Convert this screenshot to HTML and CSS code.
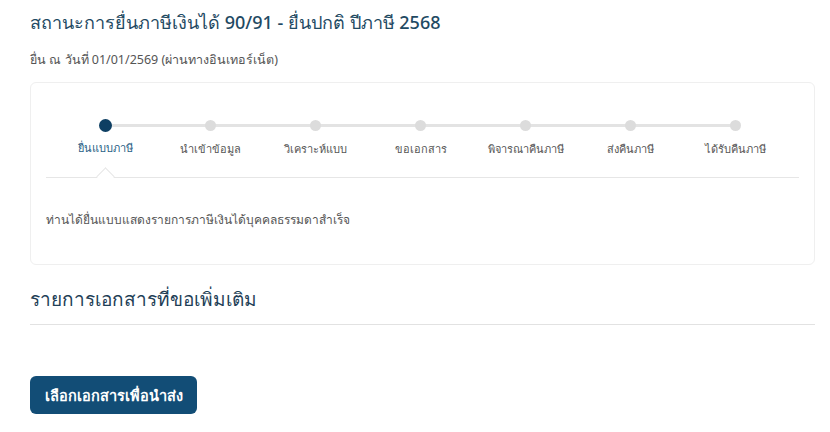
FILE: index.html
```html
<!DOCTYPE html>
<html lang="th">
<head>
<meta charset="utf-8">
<link rel="stylesheet" href="styles.css">
</head>
<body>
<main class="page">
  <h1 class="title">สถานะการยื่นภาษีเงินได้ 90/91 - ยื่นปกติ ปีภาษี 2568</h1>
  <p class="sub">ยื่น ณ วันที่ 01/01/2569 (ผ่านทางอินเทอร์เน็ต)</p>
  <section class="card">
    <ol class="steps">
      <li class="step active"><span class="dot"></span><span class="label">ยื่นแบบภาษี</span></li>
      <li class="step"><span class="dot"></span><span class="label">นำเข้าข้อมูล</span></li>
      <li class="step"><span class="dot"></span><span class="label">วิเคราะห์แบบ</span></li>
      <li class="step"><span class="dot"></span><span class="label">ขอเอกสาร</span></li>
      <li class="step"><span class="dot"></span><span class="label">พิจารณาคืนภาษี</span></li>
      <li class="step"><span class="dot"></span><span class="label">ส่งคืนภาษี</span></li>
      <li class="step"><span class="dot"></span><span class="label">ได้รับคืนภาษี</span></li>
    </ol>
    <div class="divider"><span class="notch"></span></div>
    <p class="msg">ท่านได้ยื่นแบบแสดงรายการภาษีเงินได้บุคคลธรรมดาสำเร็จ</p>
  </section>
  <h2 class="title2">รายการเอกสารที่ขอเพิ่มเติม</h2>
  <button class="btn">เลือกเอกสารเพื่อนำส่ง</button>
</main>
</body>
</html>
```
FILE: styles.css
```css
html, body { margin: 0; padding: 0; background: #fff; }
body { font-family: "Noto Sans", "Liberation Sans", sans-serif; }
.page { padding: 8px 15px 0 30px; }
.title {
  margin: 0;
  font-size: 18px;
  font-weight: 500;
  color: #1f4a63;
  line-height: 28px;
}
.sub {
  margin: 16px 0 0;
  font-size: 12.5px;
  color: #555;
  line-height: 16px;
}
.card {
  margin-top: 14px;
  border: 1px solid #efefef;
  border-radius: 6px;
  padding: 0 15px 36px;
}
.steps {
  list-style: none;
  margin: 36px 0 0 7px;
  padding: 0;
  display: grid;
  grid-template-columns: repeat(7, 105px);
  position: relative;
}
.steps::before {
  content: "";
  position: absolute;
  left: 52px;
  width: 630px;
  top: 5px;
  height: 3px;
  background: #e3e3e3;
}
.step {
  display: flex;
  flex-direction: column;
  align-items: center;
  position: relative;
}
.dot {
  width: 11px;
  height: 11px;
  border-radius: 50%;
  background: #dcdcdc;
  margin-top: 1px;
}
.active .dot {
  width: 13px;
  height: 13px;
  margin-top: 0;
  background: #0e3f63;
}
.label {
  margin-top: 8px;
  font-size: 11px;
  color: #555;
  line-height: 16px;
}
.step:not(.active) .label { margin-top: 10px; }
.active .label { color: #2a5f86; }
.divider {
  margin-top: 20px;
  height: 1px;
  background: #e6e6e6;
  position: relative;
}
.notch {
  position: absolute;
  left: 53px;
  top: -7px;
  width: 12px;
  height: 12px;
  background: #fff;
  border-top: 1px solid #e6e6e6;
  border-left: 1px solid #e6e6e6;
  transform: rotate(45deg);
}
.msg {
  margin: 34px 0 0;
  font-size: 12px;
  color: #555;
  line-height: 16px;
}
.title2 {
  margin: 21px 0 0;
  font-size: 19px;
  font-weight: 500;
  color: #1f3f57;
  line-height: 26px;
  padding-bottom: 12px;
  border-bottom: 1px solid #e2e2e2;
}
.btn {
  margin-top: 51px;
  width: 167px;
  height: 38px;
  border: 0;
  border-radius: 6px;
  background: #124d76;
  color: #fff;
  font-family: inherit;
  font-size: 14.5px;
  font-weight: 700;
}
```
